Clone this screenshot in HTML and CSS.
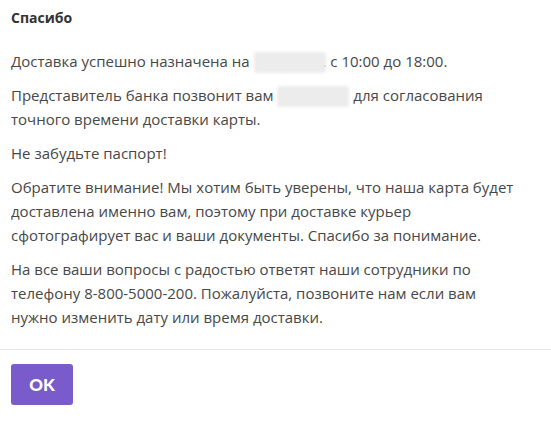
FILE: index.html
```html
<!DOCTYPE html>
<html lang="ru">
<head>
<meta charset="utf-8">
<link rel="stylesheet" href="styles.css">
</head>
<body>
<div class="modal">
  <div class="modal-header">
    <h1 class="title">Спасибо</h1>
  </div>
  <div class="modal-body">
    <p class="para">Доставка успешно назначена на <span class="redact redact-date"></span>. с 10:00 до 18:00.</p>
    <p class="para">Представитель банка позвонит вам <span class="redact redact-phone"></span> для согласования точного времени доставки карты.</p>
    <p class="para">Не забудьте паспорт!</p>
    <p class="para">Обратите внимание! Мы хотим быть уверены, что наша карта будет доставлена именно вам, поэтому при доставке курьер сфотографирует вас и ваши документы. Спасибо за понимание.</p>
    <p class="para">На все ваши вопросы с радостью ответят наши сотрудники по телефону 8-800-5000-200. Пожалуйста, позвоните нам если вам нужно изменить дату или время доставки.</p>
  </div>
  <div class="modal-footer">
    <button class="btn-ok" type="button">OK</button>
  </div>
</div>
</body>
</html>
```

FILE: styles.css
```css
html, body {
  margin: 0;
  padding: 0;
  background: #ffffff;
}

body {
  font-family: "Open Sans", Lato, "Noto Sans", sans-serif;
  color: #474747;
}

.modal {
  width: 551px;
  background: #fff;
}

.modal-header {
  padding: 8px 11px 0 11px;
}

.title {
  margin: 0;
  font-size: 14px;
  line-height: 20px;
  font-weight: 700;
  color: #333333;
}

.modal-body {
  padding: 21px 11px 20px 11px;
  max-width: 515px;
}

.para {
  margin: 0 0 10px 0;
  font-size: 15px;
  line-height: 24px;
}

.para:last-child {
  margin-bottom: 0;
}

.redact {
  display: inline-block;
  vertical-align: -6px;
  width: 72px;
  height: 21px;
  background: #ececec;
  border-radius: 3px;
  filter: blur(1.5px);
}

.redact-date {
  margin-right: -3px;
}

.modal-footer {
  border-top: 1px solid #e4e4e4;
  padding: 14px 11px 20px 11px;
}

.btn-ok {
  width: 62px;
  height: 41px;
  border: 0;
  border-radius: 3px;
  background: #7a5bcb;
  color: #fff;
  font-family: Lato, "Open Sans", sans-serif;
  font-weight: 900;
  font-size: 17px;
  padding: 0;
  cursor: pointer;
}
```
